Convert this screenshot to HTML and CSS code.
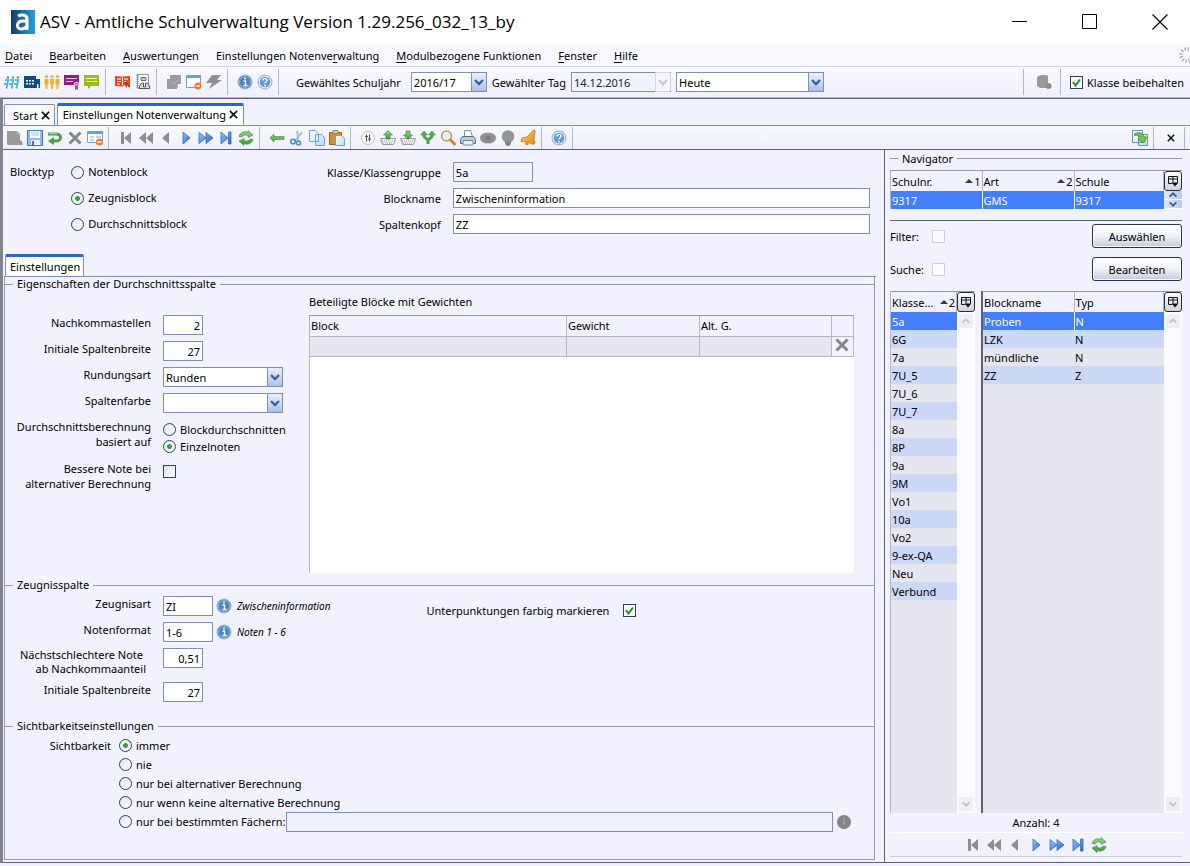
FILE: index.html
```html
<!DOCTYPE html>
<html lang="de">
<head>
<meta charset="utf-8">
<title>ASV - Amtliche Schulverwaltung</title>
<meta name="viewport" content="width=device-width, initial-scale=1">
<link rel="stylesheet" href="styles.css">
</head>
<body>
<svg class="sprite" aria-hidden="true">
  <defs>
    <linearGradient id="g-blue" x1="0" y1="0" x2="1" y2="1"><stop offset="0" stop-color="#9cc8f5"/><stop offset="1" stop-color="#1f62c9"/></linearGradient>
    <linearGradient id="g-logo" x1="0" y1="0" x2="1" y2="0"><stop offset="0" stop-color="#173c66"/><stop offset="1" stop-color="#1fa3da"/></linearGradient>
    <linearGradient id="g-green" x1="0" y1="0" x2="0" y2="1"><stop offset="0" stop-color="#9ad48c"/><stop offset="1" stop-color="#3f9640"/></linearGradient>
    <linearGradient id="g-gold" x1="0" y1="0" x2="1" y2="1"><stop offset="0" stop-color="#ffd968"/><stop offset="1" stop-color="#e08312"/></linearGradient>
    <linearGradient id="g-paper" x1="0" y1="0" x2="1" y2="1"><stop offset="0" stop-color="#ffffff"/><stop offset="1" stop-color="#b9dcf8"/></linearGradient>
  </defs>
  <symbol id="i-group" viewBox="0 0 16 16"><g fill="none" stroke="#3aa8dc" stroke-width="1.500"><path d="M1 6h3.500l-1 3M6 6h3.500l-1 3M11 6h3.500l-1 3M0 10h3.500l-1 4.500M5 10h3.500l-1 4.500M10 10h3.500l-1 4.500"/></g><g fill="#3aa8dc"><circle cx="4" cy="3.500" r="1.300"/><circle cx="9" cy="3.500" r="1.300"/><circle cx="14" cy="3.500" r="1.300"/></g></symbol>
  <symbol id="i-school" viewBox="0 0 16 16"><path fill="#0d4d83" d="M0 2h12v3h4v9H0z"/><path fill="#fff" d="M2 6h2v1.500H2zm3 0h2v1.500H5zm3 0h2v1.500H8zM2 9h2v1.500H2zm3 0h2v1.500H5zm3 0h2v1.500H8zM13 10h1.500v4H13z"/></symbol>
  <symbol id="i-people" viewBox="0 0 16 16"><g fill="#f0b428"><circle cx="2.500" cy="2.500" r="1.600"/><circle cx="8" cy="2.500" r="1.600"/><circle cx="13.500" cy="2.500" r="1.600"/><path d="M.5 5h4v5.500h-1V15h-2v-4.500h-1zM6 5h4v5.500H9V15H7v-4.500H6zM11.500 5h4v5.500h-1V15h-2v-4.500h-1z"/></g></symbol>
  <symbol id="i-cert" viewBox="0 0 16 16"><path fill="#8e1d86" d="M0 1h15v10H0z"/><path stroke="#e6c5e4" d="M2 4.500h11M2 7.500h7"/><circle cx="12.500" cy="10.500" r="2.500" fill="#c67fc1" stroke="#fff" stroke-width=".6"/><path fill="#a848a0" d="M11 12h3v4l-1.500-1-1.500 1z"/></symbol>
  <symbol id="i-board" viewBox="0 0 16 16"><path fill="#9bbd10" d="M0 1h15v11H7l-3 3v-3H0z"/><path stroke="#eef5c5" d="M2 4.500h11M2 7.500h11"/></symbol>
  <symbol id="i-book" viewBox="0 0 16 16"><path fill="#e2491f" d="M0 2l7 .5L15 2v10l-3-1v3l-3-3-1.500 1.500L0 12z"/><path stroke="#fff" d="M2 5h4M2 7.500h4M2 10h3M9 5h4M9 7.500h2M7.500 3v8" fill="none"/><path d="M10 8l5 5" stroke="#b32d10" stroke-width="1.500"/></symbol>
  <symbol id="i-notebook" viewBox="0 0 16 16"><path fill="#fff" stroke="#9299a3" d="M2.500.5h11v14h-11z"/><path stroke="#d95b4a" stroke-dasharray="1 1" d="M2.500 1v13" stroke-width="2"/><path fill="#b4cde6" stroke="#667" d="M6 3.500h5v3H6z"/><path fill="#ddd" stroke="#555" d="M4.500 12l2-3h2v4h2V9h2l2 3v2.500h-10z"/></symbol>
  <symbol id="i-stack" viewBox="0 0 16 16"><path fill="#9a9a9a" d="M4 1h11v9h-3l-1 5H1V5h3z"/><path d="M5 7l3 3 5-5" stroke="#b9b9b9" fill="none"/></symbol>
  <symbol id="i-window" viewBox="0 0 16 16"><path fill="#fff" stroke="#6e9fd6" d="M.5 1.500h14v12H.5z"/><path fill="#6aa0e0" d="M1 1h14v3H1z"/><circle cx="12" cy="12" r="3.500" fill="#ee7a2f"/><path stroke="#fff" stroke-width="1.400" d="M10 12h4"/></symbol>
  <symbol id="i-bolt" viewBox="0 0 16 16"><path fill="#909090" d="M6 1h9l-4 5h5L3 15l3-6H0z"/></symbol>
  <symbol id="i-info" viewBox="0 0 16 16"><circle cx="8" cy="8" r="7" fill="#4b84c0" stroke="#9cb9d8"/><circle cx="8" cy="8" r="5.500" fill="none" stroke="#8cb6df"/><path d="M6.500 7H8.500v4.500M6.500 11.500h4" stroke="#fff" stroke-width="1.400" fill="none"/><circle cx="8" cy="4.500" r="1" fill="#fff"/></symbol>
  <symbol id="i-help" viewBox="0 0 16 16"><circle cx="8" cy="8" r="7" fill="#dce9f7" stroke="#8eacd0"/><circle cx="8" cy="8" r="5.200" fill="#5f9ad5"/><path d="M6 6.500c0-3 4-2.500 4-.3C10 7.700 8 7.700 8 9.500" stroke="#fff" stroke-width="1.400" fill="none"/><circle cx="8" cy="11.500" r=".9" fill="#fff"/></symbol>
  <symbol id="i-db" viewBox="0 0 16 16"><path fill="#999" d="M1 3l4-2h5l2 1v8l-1 4H4l-3-2z"/><circle cx="12.500" cy="12" r="3" fill="#8c8c8c"/></symbol>
  <symbol id="i-new" viewBox="0 0 16 16"><path fill="#999" d="M0 1h10l3 3v6l2.500 2v3H1l-1-1z"/><path d="M10 1v3h3" stroke="#b5b5b5" fill="none"/></symbol>
  <symbol id="i-save" viewBox="0 0 16 16"><path fill="#8dbcf0" stroke="#3b76bf" d="M.5.500h15v15H.5z"/><path fill="#fff" d="M3 1h10v7H3z"/><path fill="#e9f3fd" d="M4 10h9v5H4z"/><path d="M4 3h8M4 5h8" stroke="#9ebfe5"/><path fill="#3b76bf" d="M5 11h2v4H5z"/></symbol>
  <symbol id="i-undo" viewBox="0 0 16 16"><path fill="none" stroke="#4da04b" stroke-width="3" d="M1 4h8c6 0 6 7 0 7H6"/><path fill="#4da04b" d="M7 7v8l-6-4z"/><path fill="none" stroke="#a3d699" d="M2 3.500h8"/></symbol>
  <symbol id="i-x" viewBox="0 0 16 16"><path stroke="#858585" stroke-width="3" d="M2.500 2.500l11 11M13.500 2.500l-11 11"/></symbol>
  <symbol id="i-formdel" viewBox="0 0 16 16"><path fill="#fff" stroke="#6e9fd6" d="M.5 1.500h15v11H.5z"/><path fill="#6aa0e0" d="M1 1h15v3H1z"/><path stroke="#7ea9db" d="M3 7h4M9 7h5M3 10h4"/><circle cx="12.500" cy="12" r="3.500" fill="#ee7a2f"/><path stroke="#fff" stroke-width="1.400" d="M10.500 12h4"/></symbol>
  <symbol id="i-first" viewBox="0 0 16 16"><path fill="#8e8e8e" d="M3 2h3v12H3zM13 2v12L6 8z"/></symbol>
  <symbol id="i-rew" viewBox="0 0 16 16"><path fill="#8e8e8e" d="M8 2v12L1 8zM15 2v12L8 8z"/></symbol>
  <symbol id="i-prev" viewBox="0 0 16 16"><path fill="#8e8e8e" d="M11 2v12L4 8z"/></symbol>
  <symbol id="i-next" viewBox="0 0 16 16"><path fill="url(#g-blue)" stroke="#2b6fce" stroke-width=".8" d="M5 2v12l7-6z"/></symbol>
  <symbol id="i-ffwd" viewBox="0 0 16 16"><path fill="url(#g-blue)" stroke="#2b6fce" stroke-width=".8" d="M1 2.500v11L8 8zM8 2.500v11L15 8z"/></symbol>
  <symbol id="i-last" viewBox="0 0 16 16"><path fill="url(#g-blue)" stroke="#2b6fce" stroke-width=".8" d="M3 2v12l7-6zM10.500 2h2.500v12h-2.500z"/></symbol>
  <symbol id="i-refresh" viewBox="0 0 16 16"><path fill="url(#g-green)" stroke="#3c8a3c" stroke-width=".6" d="M1 6.500C2 2 7 1 10 2.500V.5l5 4.500-5 2.500V5.500C7 4.500 5 5 4 7zM15 9.500c-1 4.500-6 5.500-9 4v2L1 11l5-2.500v2c3 1 5 .5 6-1.500z"/></symbol>
  <symbol id="i-back" viewBox="0 0 16 16"><path fill="url(#g-green)" stroke="#3c8a3c" stroke-width=".6" d="M1 8l4-4v2.500h10v3H5V12z"/></symbol>
  <symbol id="i-cut" viewBox="0 0 16 16"><path d="M6 11L13 2M9.500 11L8 1" stroke="#9dbddb" stroke-width="1.800"/><circle cx="4" cy="11.500" r="2.300" fill="none" stroke="#4a8acb" stroke-width="1.600"/><circle cx="9.500" cy="13" r="2" fill="none" stroke="#4a8acb" stroke-width="1.600"/></symbol>
  <symbol id="i-copy" viewBox="0 0 16 16"><path fill="url(#g-paper)" stroke="#6ea5d8" d="M.5.500h6l3 3v8h-9zM6.500 4.500h6l3 3v8h-9z"/></symbol>
  <symbol id="i-paste" viewBox="0 0 16 16"><path fill="#d88b2c" stroke="#a76216" d="M.5 2.500h12v12H.5z"/><path fill="#ccc" stroke="#888" d="M4 .5h5v3H4z"/><path fill="url(#g-paper)" stroke="#6ea5d8" d="M6.500 5.500h6l3 3v7h-9z"/></symbol>
  <symbol id="i-sliders" viewBox="0 0 16 16"><circle cx="8" cy="8" r="6.500" fill="#f7f7f7" stroke="#c4c4c4"/><path stroke="#555" d="M6.500 4.500v7M9.500 4.500v7M5 6.500h3M8 9h3"/></symbol>
  <symbol id="i-up" viewBox="0 0 16 16"><path fill="#f2f2f2" stroke="#9a9a9a" d="M.5 8.500h15l-2 6h-11z"/><path stroke="#999" stroke-dasharray="1 1" d="M2 11h12M3 13h10"/><path fill="url(#g-green)" stroke="#3c8a3c" stroke-width=".7" d="M8 .5l4.500 4.500H10v4H6V5H3.500z"/></symbol>
  <symbol id="i-down" viewBox="0 0 16 16"><path fill="#f2f2f2" stroke="#9a9a9a" d="M.5 8.500h15l-2 6h-11z"/><path stroke="#999" stroke-dasharray="1 1" d="M2 11h12M3 13h10"/><path fill="url(#g-green)" stroke="#3c8a3c" stroke-width=".7" d="M8 9.500L3.500 5H6V1h4v4h2.500z"/></symbol>
  <symbol id="i-fork" viewBox="0 0 16 16"><path d="M4 4v2c0 2 4 2 4 5v3M12 4v2c0 2-4 2-4 5" fill="none" stroke="#4da54a" stroke-width="3"/><path fill="#5cb257" stroke="#3c8a3c" stroke-width=".6" d="M.5 5L4 1l3.500 4zM8.500 5L12 1l3.500 4z"/></symbol>
  <symbol id="i-search" viewBox="0 0 16 16"><circle cx="6.500" cy="6" r="5" fill="#e3f1fd" stroke="#c69a53" stroke-width="1.400"/><path stroke="#d4801f" stroke-width="2.600" stroke-linecap="round" d="M10.500 10l4 4"/></symbol>
  <symbol id="i-print" viewBox="0 0 16 16"><path fill="#fff" stroke="#7f93a8" d="M4.500.5h6l2 6h-8z"/><path fill="#c3ccd6" stroke="#5a6f85" d="M2.500 6.500h11l2 3v4H.5v-4z"/><path fill="#dff0ff" stroke="#6d8eae" d="M3 10.500h10v4.500H3z"/></symbol>
  <symbol id="i-eye" viewBox="0 0 16 16"><ellipse cx="8" cy="8" rx="8" ry="5.500" fill="#8e8e8e"/><circle cx="8" cy="8" r="2" fill="#777"/></symbol>
  <symbol id="i-bulb" viewBox="0 0 16 16"><circle cx="8" cy="6.500" r="6.300" fill="#969696"/><path fill="#858585" d="M5 11h6v3l-2 2H7l-2-2z"/></symbol>
  <symbol id="i-horn" viewBox="0 0 16 16"><path fill="url(#g-gold)" stroke="#b8690c" stroke-width=".7" d="M13 .5h2l-1 9 1 3.500-2 1.500-5-2.500-7-.5L2 8l5-1z"/><circle cx="7" cy="13.500" r="1.800" fill="#e38b1c"/></symbol>
  <symbol id="i-swap" viewBox="0 0 16 16"><path fill="url(#g-paper)" stroke="#5d94c8" d="M.5.500h10v12H.5zM6.500 4.500h9v11h-9z"/><path fill="#7cc934" stroke="#2f7c28" stroke-width=".7" d="M2.500 3.500c6-2 9 0 9.500 3.500h2.500L12 13l-6-3.500 2.500-1C8 6 6 4.500 2.500 5.500z"/></symbol>
  <symbol id="i-columns" viewBox="0 0 12 12"><path fill="none" stroke="#111" d="M1.500 1.500h9v6M1.500 1.500v7H5M1.500 4h9M6 1.500v6"/><path fill="#111" d="M4.500 7.500h7L8 11.500z"/></symbol>
  <symbol id="i-chev-d" viewBox="0 0 12 12"><path fill="none" stroke="currentColor" stroke-width="2.400" d="M2 4l4 4 4-4"/></symbol>
  <symbol id="i-chev-u" viewBox="0 0 12 12"><path fill="none" stroke="currentColor" stroke-width="2.400" d="M2 8l4-4 4 4"/></symbol>
  <symbol id="i-close" viewBox="0 0 10 10"><path stroke="#111" stroke-width="1.800" d="M1 1l8 8M9 1l-8 8"/></symbol>
  <symbol id="i-sort" viewBox="0 0 8 4"><path fill="#2c3e55" d="M0 4l4-4 4 4z"/></symbol>
</svg>

<div class="app">
  <header class="titlebar">
    <svg class="logo" viewBox="0 0 24 24"><path fill="url(#g-logo)" d="M0 0h24v24H0z"/><g fill="none" stroke="#fff" stroke-width="3"><path d="M7 6c4-2 9-1 9 3v11"/><path d="M16 11h-4c-7 0-7 8-2 8 3 0 6-2 6-4"/></g></svg>
    <h1 class="title">ASV - Amtliche Schulverwaltung Version 1.29.256_032_13_by</h1>
    <div class="window-buttons">
      <button class="plain" type="button" aria-label="Minimieren"><svg viewBox="0 0 16 16"><path stroke="#000" d="M0 7.500h15"/></svg></button>
      <button class="plain" type="button" aria-label="Maximieren"><svg viewBox="0 0 16 16"><path fill="none" stroke="#000" d="M.5.500h14v14H.5z"/></svg></button>
      <button class="plain" type="button" aria-label="Schließen"><svg viewBox="0 0 16 16"><path stroke="#000" stroke-width="1.200" d="M.5.500l15 15M15.500.500l-15 15"/></svg></button>
    </div>
  </header>

  <nav class="menubar">
    <a href="#"><u>D</u>atei</a><a href="#"><u>B</u>earbeiten</a><a href="#"><u>A</u>uswertungen</a><a href="#">Einstellungen Notenve<u>r</u>waltung</a><a href="#"><u>M</u>odulbezogene Funktionen</a><a href="#"><u>F</u>enster</a><a href="#"><u>H</u>ilfe</a>
    <svg class="busy" viewBox="0 0 12 12"><circle cx="6" cy="6" r="4.500" fill="none" stroke="#b5b5b5" stroke-width="3" stroke-dasharray="1 1.350"/></svg>
  </nav>

  <div class="toolbar toolbar--main">
    <div class="tools">
      <button class="plain" type="button" aria-label="Gruppen"><svg><use href="#i-group"/></svg></button>
      <button class="plain" type="button" aria-label="Schule"><svg><use href="#i-school"/></svg></button>
      <button class="plain" type="button" aria-label="Schüler"><svg><use href="#i-people"/></svg></button>
      <button class="plain" type="button" aria-label="Zeugnisse"><svg><use href="#i-cert"/></svg></button>
      <button class="plain" type="button" aria-label="Unterricht"><svg><use href="#i-board"/></svg></button>
    </div>
    <div class="tools">
      <button class="plain" type="button" aria-label="Noten"><svg><use href="#i-book"/></svg></button>
      <button class="plain" type="button" aria-label="Notizbuch"><svg><use href="#i-notebook"/></svg></button>
    </div>
    <div class="tools">
      <button class="plain" type="button" aria-label="Fenster stapeln"><svg><use href="#i-stack"/></svg></button>
      <button class="plain" type="button" aria-label="Fenster schließen"><svg><use href="#i-window"/></svg></button>
      <button class="plain" type="button" aria-label="Aktion"><svg><use href="#i-bolt"/></svg></button>
    </div>
    <div class="tools">
      <button class="plain" type="button" aria-label="Info"><svg><use href="#i-info"/></svg></button>
      <button class="plain" type="button" aria-label="Hilfe"><svg><use href="#i-help"/></svg></button>
    </div>
    <div class="context">
      <label for="year">Gewähltes Schuljahr</label>
      <span class="combo combo--year"><select id="year"><option>2016/17</option></select><svg class="arrow"><use href="#i-chev-d"/></svg></span>
      <label for="day">Gewählter Tag</label>
      <span class="combo combo--day combo--off"><select id="day" disabled><option>14.12.2016</option></select><svg class="arrow"><use href="#i-chev-d"/></svg></span>
      <span class="combo combo--today"><select aria-label="Tag"><option>Heute</option></select><svg class="arrow"><use href="#i-chev-d"/></svg></span>
    </div>
    <div class="tools tools--db"><button class="plain" type="button" aria-label="Datenbank"><svg><use href="#i-db"/></svg></button></div>
    <label class="keep"><input type="checkbox" checked>Klasse beibehalten</label>
  </div>

  <div class="workspace">
    <div class="tabs">
      <button class="tab" type="button">Start <svg><use href="#i-close"/></svg></button>
      <button class="tab tab--active" type="button">Einstellungen Notenverwaltung <svg><use href="#i-close"/></svg></button>
    </div>

    <div class="toolbar toolbar--module">
      <div class="tools">
        <button class="plain" type="button" aria-label="Neu"><svg><use href="#i-new"/></svg></button>
        <button class="plain" type="button" aria-label="Speichern"><svg><use href="#i-save"/></svg></button>
        <button class="plain" type="button" aria-label="Rückgängig"><svg><use href="#i-undo"/></svg></button>
        <button class="plain" type="button" aria-label="Löschen"><svg><use href="#i-x"/></svg></button>
        <button class="plain" type="button" aria-label="Formular schließen"><svg><use href="#i-formdel"/></svg></button>
      </div>
      <div class="tools">
        <button class="plain" type="button" aria-label="Erster"><svg><use href="#i-first"/></svg></button>
        <button class="plain" type="button" aria-label="Schnell zurück"><svg><use href="#i-rew"/></svg></button>
        <button class="plain" type="button" aria-label="Zurück"><svg><use href="#i-prev"/></svg></button>
        <button class="plain" type="button" aria-label="Weiter"><svg><use href="#i-next"/></svg></button>
        <button class="plain" type="button" aria-label="Schnell vor"><svg><use href="#i-ffwd"/></svg></button>
        <button class="plain" type="button" aria-label="Letzter"><svg><use href="#i-last"/></svg></button>
        <button class="plain" type="button" aria-label="Aktualisieren"><svg><use href="#i-refresh"/></svg></button>
      </div>
      <div class="tools">
        <button class="plain" type="button" aria-label="Vorherige Ansicht"><svg><use href="#i-back"/></svg></button>
        <button class="plain" type="button" aria-label="Ausschneiden"><svg><use href="#i-cut"/></svg></button>
        <button class="plain" type="button" aria-label="Kopieren"><svg><use href="#i-copy"/></svg></button>
        <button class="plain" type="button" aria-label="Einfügen"><svg><use href="#i-paste"/></svg></button>
      </div>
      <div class="tools">
        <button class="plain" type="button" aria-label="Optionen"><svg><use href="#i-sliders"/></svg></button>
        <button class="plain" type="button" aria-label="Export"><svg><use href="#i-up"/></svg></button>
        <button class="plain" type="button" aria-label="Import"><svg><use href="#i-down"/></svg></button>
        <button class="plain" type="button" aria-label="Verzweigen"><svg><use href="#i-fork"/></svg></button>
        <button class="plain" type="button" aria-label="Suchen"><svg><use href="#i-search"/></svg></button>
        <button class="plain" type="button" aria-label="Drucken"><svg><use href="#i-print"/></svg></button>
        <button class="plain" type="button" aria-label="Ansicht"><svg><use href="#i-eye"/></svg></button>
        <button class="plain" type="button" aria-label="Hinweis"><svg><use href="#i-bulb"/></svg></button>
        <button class="plain" type="button" aria-label="Meldung"><svg><use href="#i-horn"/></svg></button>
      </div>
      <div class="tools"><button class="plain" type="button" aria-label="Hilfe"><svg><use href="#i-help"/></svg></button></div>
      <div class="tools tools--end"><button class="plain" type="button" aria-label="Navigator umschalten"><svg><use href="#i-swap"/></svg></button></div>
      <div class="tools"><button class="plain plain--close" type="button" aria-label="Modul schließen"><svg><use href="#i-close"/></svg></button></div>
    </div>

    <div class="columns">
      <main class="editor">
        <div class="block-form">
          <div class="block-type" role="radiogroup" aria-labelledby="bt">
            <span id="bt">Blocktyp</span>
            <div class="block-options">
              <label><input type="radio" name="type">Notenblock</label>
              <label><input type="radio" name="type" checked>Zeugnisblock</label>
              <label><input type="radio" name="type">Durchschnittsblock</label>
            </div>
          </div>
          <div class="block-fields">
            <label for="klasse">Klasse/Klassengruppe</label><input id="klasse" class="w-80 off" type="text" value="5a" readonly>
            <label for="bname">Blockname</label><input id="bname" type="text" value="Zwischeninformation">
            <label for="kopf">Spaltenkopf</label><input id="kopf" type="text" value="ZZ">
          </div>
        </div>

        <div class="tabs tabs--inner"><button class="tab tab--active" type="button">Einstellungen</button></div>
        <div class="settings">
          <fieldset class="group group--fill">
            <legend>Eigenschaften der Durchschnittsspalte</legend>
            <div class="average">
              <div class="form average-form">
                <label for="nk">Nachkommastellen</label><input id="nk" class="w-40 num" type="text" value="2">
                <label for="isb">Initiale Spaltenbreite</label><input id="isb" class="w-40 num" type="text" value="27">
                <label for="rund">Rundungsart</label><span class="combo combo--field"><select id="rund"><option>Runden</option></select><svg class="arrow"><use href="#i-chev-d"/></svg></span>
                <label for="farbe">Spaltenfarbe</label><span class="combo combo--field"><select id="farbe"><option></option></select><svg class="arrow"><use href="#i-chev-d"/></svg></span>
                <span id="basis" class="caption">Durchschnittsberechnung<br>basiert auf</span>
                <div class="basis" role="radiogroup" aria-labelledby="basis">
                  <label><input type="radio" name="basis">Blockdurchschnitten</label>
                  <label><input type="radio" name="basis" checked>Einzelnoten</label>
                </div>
                <label for="besser">Bessere Note bei<br>alternativer Berechnung</label><input id="besser" class="lower" type="checkbox">
              </div>
              <div class="weights">
                <h2 id="wt">Beteiligte Blöcke mit Gewichten</h2>
                <div class="weights-body">
                  <table aria-labelledby="wt">
                    <colgroup><col class="c-block"><col class="c-weight"><col class="c-alt"><col class="c-del"></colgroup>
                    <thead><tr><th>Block</th><th>Gewicht</th><th>Alt. G.</th><th></th></tr></thead>
                    <tbody><tr><td></td><td></td><td></td><td class="del"><button class="plain" type="button" aria-label="Zeile löschen"><svg><use href="#i-x"/></svg></button></td></tr></tbody>
                  </table>
                </div>
              </div>
            </div>
          </fieldset>

          <fieldset class="group">
            <legend>Zeugnisspalte</legend>
            <div class="report">
              <div class="form report-form">
                <label for="zart">Zeugnisart</label><span class="with-info"><input id="zart" class="w-50" type="text" value="ZI"><svg class="icon"><use href="#i-info"/></svg><em>Zwischeninformation</em></span>
                <label for="nfmt">Notenformat</label><span class="with-info"><input id="nfmt" class="w-50" type="text" value="1-6"><svg class="icon"><use href="#i-info"/></svg><em>Noten 1 - 6</em></span>
                <label class="inset" for="nachk"><span class="inset-line">Nächstschlechtere Note</span><br>ab Nachkommaanteil</label><input id="nachk" class="w-40 num" type="text" value="0,51">
                <label for="isb2">Initiale Spaltenbreite</label><input id="isb2" class="w-40 num" type="text" value="27">
              </div>
              <label class="mark">Unterpunktungen farbig markieren<input type="checkbox" checked></label>
            </div>
          </fieldset>

          <fieldset class="group group--last">
            <legend>Sichtbarkeitseinstellungen</legend>
            <div class="visibility" role="radiogroup" aria-labelledby="vis">
              <span id="vis" class="caption">Sichtbarkeit</span>
              <div class="vis-options">
                <label><input type="radio" name="vis" checked>immer</label>
                <label><input type="radio" name="vis">nie</label>
                <label><input type="radio" name="vis">nur bei alternativer Berechnung</label>
                <label><input type="radio" name="vis">nur wenn keine alternative Berechnung</label>
                <div class="subjects">
                  <label><input type="radio" name="vis">nur bei bestimmten Fächern:</label>
                  <input class="off" type="text" aria-label="Fächer" readonly>
                  <svg class="icon" viewBox="0 0 16 16"><circle cx="8" cy="8" r="7" fill="#858585"/><path d="M8 7v4M8 4v1.500" stroke="#aaa" stroke-width="1.400"/></svg>
                </div>
              </div>
            </div>
          </fieldset>
        </div>
      </main>

      <aside class="navigator">
        <div class="nav-title"><h2>Navigator</h2></div>
        <div class="grid-box grid-box--schools">
          <table>
            <colgroup><col class="c-name"><col class="c-art"><col></colgroup>
            <thead><tr><th><span class="head">Schulnr. <span class="sort"><svg><use href="#i-sort"/></svg>1</span></span></th><th><span class="head">Art <span class="sort"><svg><use href="#i-sort"/></svg>2</span></span></th><th>Schule</th></tr></thead>
            <tbody><tr class="selected"><td>9317</td><td>GMS</td><td>9317</td></tr></tbody>
          </table>
          <div class="rail"><button class="colpick" type="button" aria-label="Spalten"><svg><use href="#i-columns"/></svg></button>
            <button class="step step--half" type="button" aria-label="Hoch"><svg><use href="#i-chev-u"/></svg></button><button class="step step--half" type="button" aria-label="Runter"><svg><use href="#i-chev-d"/></svg></button></div>
        </div>
        <div class="filters">
          <label class="faint">Filter:<input type="checkbox" disabled></label><button class="push" type="button">Auswählen</button>
          <label class="faint">Suche:<input type="checkbox" disabled></label><button class="push" type="button">Bearbeiten</button>
        </div>
        <div class="lists">
          <div class="grid-box grid-box--classes">
            <table>
              <thead><tr><th><span class="head">Klasse... <span class="sort"><svg><use href="#i-sort"/></svg>2</span></span></th></tr></thead>
              <tbody>
                <tr class="selected"><td>5a</td></tr><tr><td>6G</td></tr><tr><td>7a</td></tr><tr><td>7U_5</td></tr><tr><td>7U_6</td></tr><tr><td>7U_7</td></tr><tr><td>8a</td></tr><tr><td>8P</td></tr><tr><td>9a</td></tr><tr><td>9M</td></tr><tr><td>Vo1</td></tr><tr><td>10a</td></tr><tr><td>Vo2</td></tr><tr><td>9-ex-QA</td></tr><tr><td>Neu</td></tr><tr><td>Verbund</td></tr>
              </tbody>
            </table>
            <div class="rail"><button class="colpick" type="button" aria-label="Spalten"><svg><use href="#i-columns"/></svg></button>
              <button class="step step--off" type="button" aria-label="Hoch"><svg><use href="#i-chev-u"/></svg></button><button class="step step--off step--end" type="button" aria-label="Runter"><svg><use href="#i-chev-d"/></svg></button></div>
          </div>
          <div class="grid-box grid-box--blocks">
            <table>
              <colgroup><col class="c-name"><col></colgroup>
              <thead><tr><th>Blockname</th><th>Typ</th></tr></thead>
              <tbody><tr class="selected"><td>Proben</td><td>N</td></tr><tr><td>LZK</td><td>N</td></tr><tr><td>mündliche</td><td>N</td></tr><tr><td>ZZ</td><td>Z</td></tr></tbody>
            </table>
            <div class="rail"><button class="colpick" type="button" aria-label="Spalten"><svg><use href="#i-columns"/></svg></button>
              <button class="step step--off" type="button" aria-label="Hoch"><svg><use href="#i-chev-u"/></svg></button><button class="step step--off step--end" type="button" aria-label="Runter"><svg><use href="#i-chev-d"/></svg></button></div>
          </div>
        </div>
        <p class="count">Anzahl: 4</p>
        <div class="pager">
          <button class="plain" type="button" aria-label="Erster"><svg><use href="#i-first"/></svg></button>
          <button class="plain" type="button" aria-label="Schnell zurück"><svg><use href="#i-rew"/></svg></button>
          <button class="plain" type="button" aria-label="Zurück"><svg><use href="#i-prev"/></svg></button>
          <button class="plain" type="button" aria-label="Weiter"><svg><use href="#i-next"/></svg></button>
          <button class="plain" type="button" aria-label="Schnell vor"><svg><use href="#i-ffwd"/></svg></button>
          <button class="plain" type="button" aria-label="Letzter"><svg><use href="#i-last"/></svg></button>
          <button class="plain" type="button" aria-label="Aktualisieren"><svg><use href="#i-refresh"/></svg></button>
        </div>
      </aside>
    </div>
  </div>
</div>
</body>
</html>
```

FILE: styles.css
```css
:root {
  --bg: #f1f2fe;
  --line: #9299a8;
  --line-dark: #60636e;
  --field: #7d92b3;
  --rule: #b4b7c4;
  --select: #437efb;
  --row: #e6e6f0;
  --row-alt: #cbd9f6;
}

* { box-sizing: border-box; }

body {
  margin: 0;
  background: var(--bg);
  color: #000;
  font: 11px/15px "Noto Sans", "Open Sans", sans-serif;
}

h1, h2, p { margin: 0; font-size: inherit; font-weight: normal; }
button, input, select { font: inherit; color: inherit; margin: 0; }
label { white-space: nowrap; }
svg { display: block; }
.sprite { position: absolute; width: 0; height: 0; }
.icon { width: 16px; height: 16px; flex: none; }

.app { min-height: 100vh; display: flex; flex-direction: column; }

/* window frame */
.titlebar { display: flex; align-items: center; height: 44px; padding: 0 22px 0 11px; background: #fff; }
.logo { width: 24px; height: 24px; }
.title { margin-left: 5px; font: 17px/24px "Open Sans", "Noto Sans", sans-serif; white-space: nowrap; }
.window-buttons { display: flex; gap: 54px; margin-left: auto; }

.plain { width: 16px; height: 16px; padding: 0; border: 0; background: none; flex: none; }
.plain svg { width: 16px; height: 16px; }
.plain--close { padding: 4px; }
.plain--close svg { width: 8px; height: 8px; }

.menubar { display: flex; align-items: center; gap: 17px; height: 23px; padding-left: 5px; background: #f8f8ff; border-bottom: 1px solid #d3d5df; overflow: hidden; }
.menubar a { color: inherit; text-decoration: none; white-space: nowrap; }
.menubar u { text-underline-offset: 2px; }
.busy { width: 16px; height: 16px; flex: none; margin: 0 -5px 0 auto; }

/* toolbars */
.toolbar { display: flex; align-items: center; background: linear-gradient(#f8f8ff, #eff0fb); }
.toolbar--main { height: 31px; border-bottom: 1px solid var(--rule); }
.tools { display: flex; align-items: center; gap: 4px; height: 26px; padding: 0 5px 0 9px; border-right: 1px solid var(--rule); }
.tools:first-child { padding-left: 4px; }
.context { display: flex; align-items: center; gap: 5px; margin-left: 17px; }
.combo { display: grid; grid-template-columns: 1fr 16px; height: 20px; }
.combo select { grid-area: 1 / 1 / 2 / 3; width: 100%; padding: 0 20px 0 2px; border: 1px solid var(--field); border-radius: 0; background: #fff; appearance: none; opacity: 1; }
.arrow { grid-area: 1 / 2 / 2 / 3; z-index: 1; width: 16px; height: 20px; padding: 1px; color: #3d5f97; background: linear-gradient(#eaf1fd, #a9c0ec); border: 1px solid var(--field); border-radius: 0 2px 2px 0; pointer-events: none; }
.combo--off select { background: var(--bg); border-color: var(--field); color: #222; }
.combo--off .arrow { color: #c9cbd3; background: #f5f5fb; border-color: #d4d7e2; }
.combo--year { width: 76px; margin-left: 5px; }
.combo--day { width: 100px; }
.combo--today { width: 148px; }
.combo--field { width: 120px; }
.tools--db { margin-left: auto; border-left: 1px solid var(--rule); padding: 0 8px 0 12px; }
.keep { padding: 0 6px 0 9px; }
.toolbar--module { height: 24px; border-bottom: 1px solid var(--line-dark); }
.toolbar--module .tools { height: 22px; }
.toolbar--module .tools--end { margin-left: auto; }
.toolbar--module .tools:last-child { margin-right: 5px; }

/* controls */
input[type="text"] { width: 100%; height: 20px; padding: 0 2px; border: 1px solid var(--field); border-radius: 0; background: #fff; outline: 0; }
input[type="text"].off { background: var(--bg); }
input.num { text-align: right; }
input.w-40 { width: 40px; }
input.w-50 { width: 50px; }
input.w-80 { width: 80px; }
input[type="radio"], input[type="checkbox"] { appearance: none; width: 13px; height: 13px; flex: none; border: 1px solid #2b4266; background: linear-gradient(135deg, #dfe2ea, #fff); }
input[type="radio"] { border-radius: 50%; }
input[type="radio"]:checked { background: radial-gradient(circle, #3f9a45 0 2px, #f4f8f4 3px); }
input[type="checkbox"]:checked { background: #fff url("data:image/svg+xml,%3Csvg xmlns='http://www.w3.org/2000/svg' viewBox='0 0 11 11'%3E%3Cpath d='M2 5l2.500 3.500L9 2.500' fill='none' stroke='%231f8a28' stroke-width='2'/%3E%3C/svg%3E"); }
input[type="checkbox"]:disabled { border-color: #cfd1da; background: #fbfbfe; }
label:has(> input) { display: flex; align-items: center; gap: 4px; }

/* tabs */
.workspace { flex: 1; display: flex; flex-direction: column; border: solid var(--line-dark); border-width: 1px 0 1px 3px; margin-bottom: 3px; border-left-color: #81848f; }
.tabs { display: flex; align-items: flex-end; gap: 2px; height: 27px; padding-left: 1px; border-bottom: 1px solid var(--field); }
.tab { display: flex; align-items: center; gap: 3px; height: 21px; padding: 0 4px 0 8px; border: 1px solid var(--field); border-bottom: 0; border-radius: 2px 2px 0 0; background: #fafaff; white-space: nowrap; }
.tab svg { width: 9px; height: 9px; }
.tab--active { height: 22px; padding: 0 5px 2px; border-top: 3px solid #2f63c8; background: #fff; }
.tabs--inner { height: 23px; }
.tabs--inner .tab { padding: 0 3px 0 4px; }

.columns { flex: 1; display: flex; gap: 8px; }
.editor { flex: 1; min-width: 0; display: flex; flex-direction: column; padding: 0 0 2px 1px; }
.block-form { display: flex; padding: 12px 6px 20px 6px; }
.block-type { display: flex; flex: 0 0 317px; gap: 17px; line-height: 20px; }
.block-options { display: grid; grid-auto-rows: 20px; gap: 6px; }
.block-fields { flex: 1; display: grid; grid-template-columns: auto 1fr; grid-auto-rows: 20px; align-items: center; gap: 6px 12px; text-align: right; }

.settings { flex: 1; display: flex; flex-direction: column; margin-right: 1px; border: 1px solid var(--line); border-top: 0; }
.group { min-width: 0; margin: 0; padding: 0; border: 0; border-top: 1px solid var(--line); }
.group legend { margin-left: 8px; padding: 0 4px; line-height: 14px; }
.group--fill { flex: 1; display: flex; flex-direction: column; }

.form { display: grid; grid-template-columns: 146px auto; gap: 6px 12px; align-content: start; justify-items: start; }
.form > label, .form > .caption { justify-self: end; text-align: right; white-space: nowrap; }
.average { flex: 1; display: grid; grid-template-columns: 304px 1fr; height: 100%; }
.average-form { padding-top: 24px; }
.basis { display: grid; grid-auto-rows: 17px; padding-top: 2px; }
.form > input.lower { margin-top: 4px; }
.weights { display: flex; flex-direction: column; padding: 3px 20px 5px 0; }
.weights h2 { margin-bottom: 6px; }
.weights-body { flex: 1; background: #fff; border-top: 1px solid var(--line); border-left: 1px solid var(--rule); }

table { width: 100%; border-collapse: collapse; table-layout: fixed; }
th { height: 20px; padding: 0 1px; font-weight: normal; text-align: left; border-right: 1px solid var(--rule); background: var(--bg); white-space: nowrap; }
td { height: 18px; padding: 0 1px; }
.c-weight { width: 133px; }
.c-alt { width: 132px; }
.c-del { width: 22px; }
.weights td { border: 1px solid var(--rule); border-left: 0; background: var(--row); }
.weights td.del { background: var(--bg); padding: 0 2px; }

.report { display: flex; gap: 96px; padding: 4px 0 17px; }
.with-info { display: flex; align-items: center; gap: 3px; }
.with-info em { margin-left: 2px; font-size: 10px; white-space: nowrap; }
.form > label.inset { padding-right: 5px; line-height: 14px; }
.inset-line { padding-right: 3px; }
.mark { align-self: flex-start; height: 28px; }
label.mark:has(> input) { gap: 14px; }

.visibility { display: flex; gap: 8px; padding: 3px 22px 28px 0; }
.visibility > .caption { flex: 0 0 106px; text-align: right; line-height: 19px; }
.vis-options { flex: 1; display: grid; grid-auto-rows: 19px; }
.subjects { display: flex; align-items: center; }
.subjects .icon { margin-left: 3px; }

/* navigator */
.navigator { flex: 0 0 306px; display: flex; flex-direction: column; padding: 0 8px 5px 5px; border-left: 1px solid var(--line-dark); }
.nav-title { display: flex; align-items: center; gap: 4px; height: 16px; margin-bottom: 4px; }
.nav-title::before, .nav-title::after { content: ""; height: 1px; background: var(--line); flex: 1; }
.nav-title::before { flex: 0 0 8px; }
.grid-box { display: flex; align-items: stretch; border-top: 1px solid var(--line); border-left: 1px solid var(--rule); background: var(--row); }
.grid-box table { flex: 1; width: auto; min-width: 0; align-self: flex-start; }
.grid-box tr.selected td + td { border-left: 1px solid #f6f6ff; }
.grid-box tbody tr:nth-child(even) { background: var(--row-alt); }
.grid-box tbody tr.selected { background: var(--select); color: #fff; }
.c-name { width: 91px; }
.c-art { width: 92px; }
.head { display: flex; justify-content: space-between; }
.sort { display: flex; align-items: center; gap: 1px; }
.sort svg { width: 8px; height: 4px; }
.rail { flex: 0 0 18px; display: flex; flex-direction: column; align-items: stretch; background: #fafaff; }
.colpick { height: 20px; padding: 3px 2px; border: 1px solid #222c3c; border-radius: 3px; background: linear-gradient(#fff, #cfd1dc); }
.colpick svg { width: 12px; height: 12px; }
.step { display: flex; align-items: center; justify-content: center; height: 16px; padding: 0; border: 0; color: #3d5f97; background: linear-gradient(90deg, #dfe9fb, #b7caf0); }
.step svg { width: 10px; height: 10px; }
.step--half { height: 9px; border-bottom: 1px solid #fff; }
.step--off { margin: 2px 2px 0; height: 14px; color: #c4c4cb; background: #eeeef3; }
.step--end { margin: auto 2px 2px; }
.filters { display: grid; grid-template-columns: 1fr 90px; align-items: center; gap: 9px; margin-top: 11px; padding: 3px 0 10px; border-top: 1px solid var(--line-dark); }
.filters .faint:has(> input) { display: grid; grid-template-columns: 38px 13px; }
.push { height: 24px; padding: 0; border: 1px solid #26354f; border-radius: 3px; background: linear-gradient(#fff, #f0f1fa 50%, #c5c8d8); box-shadow: inset 0 0 0 1px #fff; }
.lists { flex: 1; display: flex; gap: 6px; }
.grid-box--classes { flex: 0 0 85px; }
.grid-box--blocks { flex: 1; border-left: 2px solid var(--line-dark); }
.count { padding: 2px 0; text-align: center; border-bottom: 1px solid #fff; }
.pager { display: flex; justify-content: center; gap: 5px; padding: 4px 0 3px; border-bottom: 1px solid #c9cbd7; }
```
